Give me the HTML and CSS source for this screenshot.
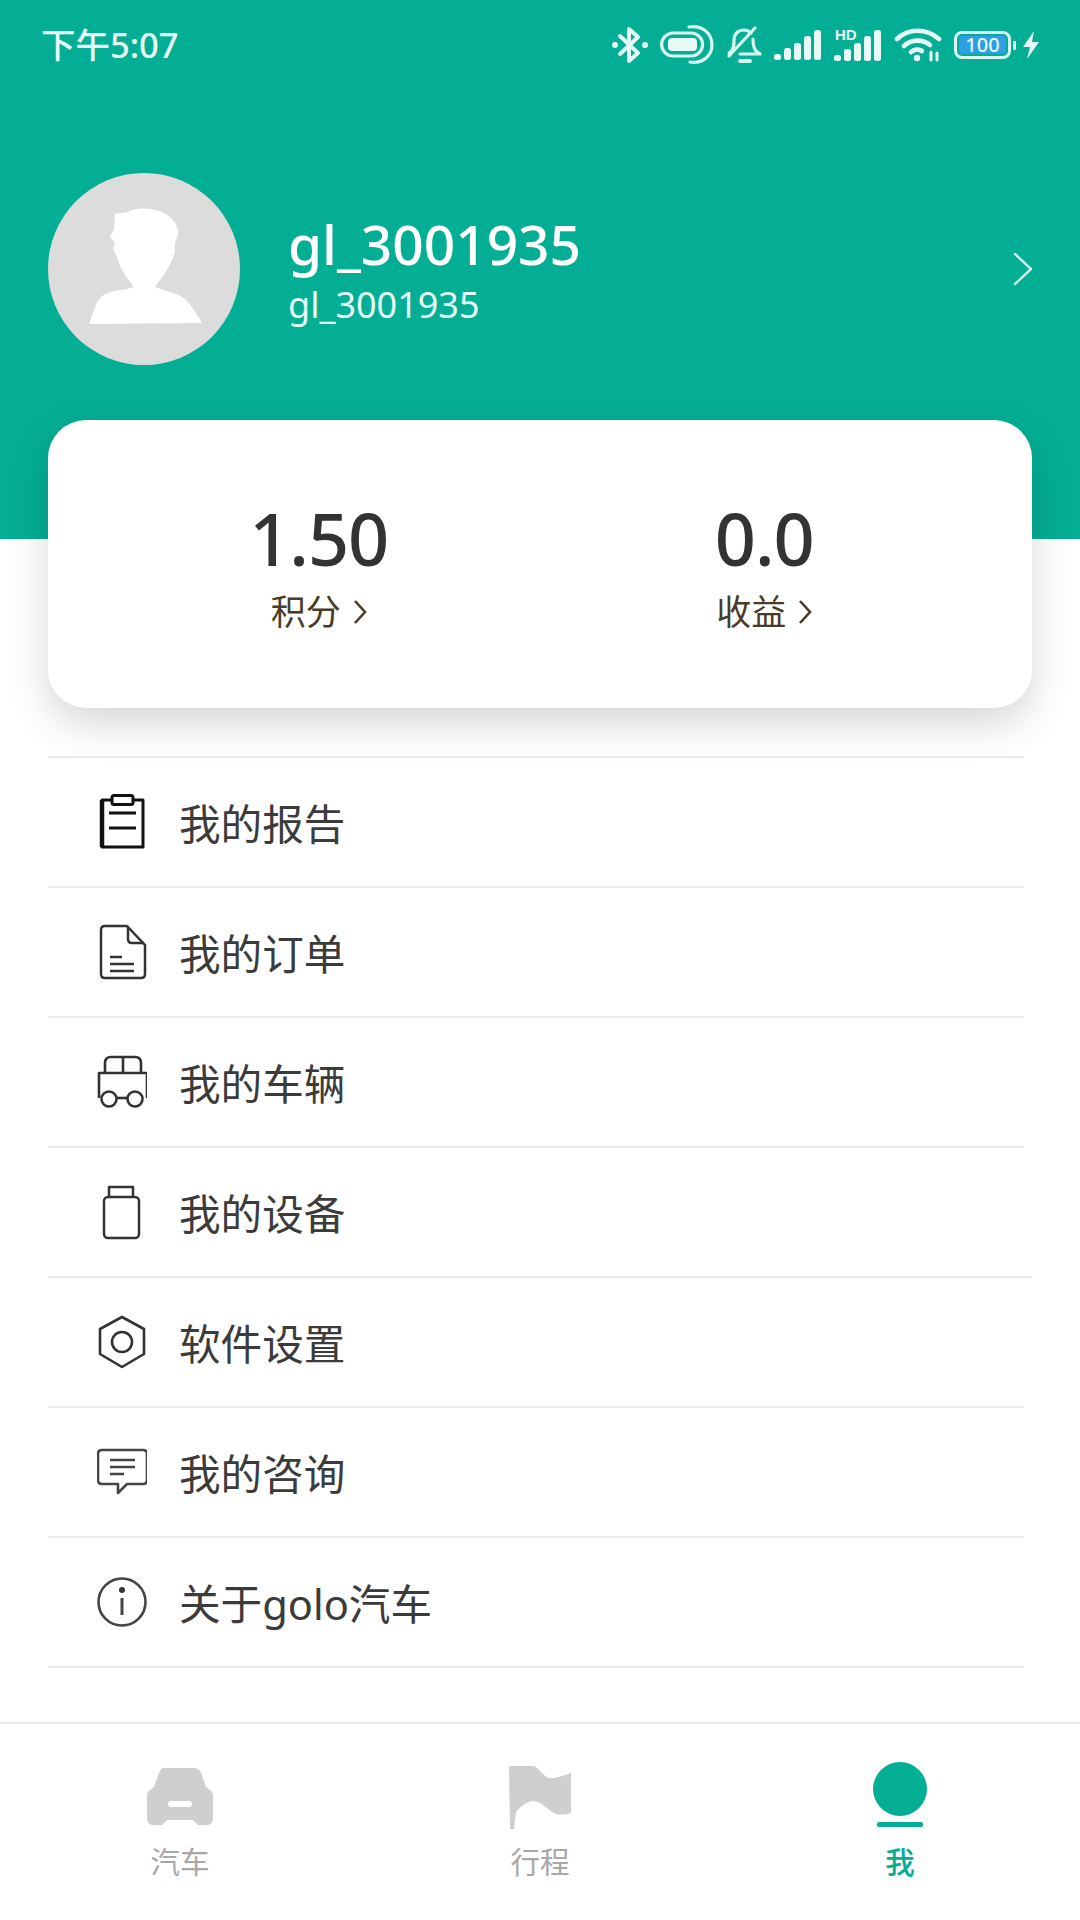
FILE: index.html
```html
<!DOCTYPE html>
<html lang="zh-CN">
<head>
<meta charset="utf-8">
<title>我</title>
<link rel="stylesheet" href="styles.css">
</head>
<body>
<div class="app">
  <header class="hero">
    <div class="statusbar">
      <span class="clock">下午5:07</span>
      <div class="status-icons">
        <svg class="si" width="36" height="38" viewBox="0 0 36 38" fill="none" stroke="#e6fbf6" stroke-width="4" stroke-linecap="round" stroke-linejoin="round"><path d="M8 10 L26 27 L17 35 V3 L26 11 L8 28"/><circle cx="3" cy="19" r="3" fill="#e6fbf6" stroke="none"/><circle cx="33" cy="19" r="3" fill="#e6fbf6" stroke="none"/></svg>
        <svg class="si" width="54" height="40" viewBox="0 0 54 40" fill="none" stroke="#d8f7f0" stroke-width="3.200"><rect x="1.600" y="8" width="41" height="23" rx="11.500"/><rect x="8" y="13" width="29" height="13" rx="4" fill="#e6fbf6" stroke="none"/><path d="M29 2 C42 0 52 8 52 20 C52 31 42 39 30 37" stroke-linecap="round"/></svg>
        <svg class="si" width="36" height="38" viewBox="0 0 36 38" fill="none" stroke="#d8f7f0" stroke-width="3.200" stroke-linecap="round" stroke-linejoin="round"><path d="M3 27 C8 24 8 19 8 14 C8 8 12 4 18 4 C21 4 23 5 25 7"/><path d="M27 13 C27 20 28 25 34 28 H14"/><path d="M3 30 L29 2"/><path d="M14 35 H24" stroke-width="3.800"/></svg>
        <svg class="si" width="48" height="32" viewBox="0 0 48 32" fill="#e6fbf6"><rect x="0" y="25" width="7" height="6" rx="2.500"/><rect x="10" y="19" width="7" height="12" rx="2.500"/><rect x="20" y="14" width="7" height="17" rx="2.500"/><rect x="30" y="7" width="7" height="24" rx="2.500"/><rect x="40" y="1" width="7" height="30" rx="2.500"/></svg>
        <svg class="si" width="48" height="40" viewBox="0 0 48 40" fill="#e6fbf6"><text class="hd" x="1" y="15">HD</text><rect x="0" y="30" width="7" height="6" rx="2.500"/><rect x="10" y="24" width="7" height="12" rx="2.500"/><rect x="20" y="18" width="7" height="18" rx="2.500"/><rect x="30" y="11" width="7" height="25" rx="2.500"/><rect x="40" y="5" width="7" height="31" rx="2.500"/></svg>
        <svg class="si" width="48" height="34" viewBox="0 0 48 34" fill="none" stroke="#e6fbf6" stroke-width="4.600" stroke-linecap="round"><path d="M3 11 C14 0 33 0 45 11"/><path d="M10 18 C17 11 29 11 36 17"/><path d="M17 24 C20 21 25 21 28 23"/><circle cx="23" cy="30" r="3.200" fill="#e6fbf6" stroke="none"/><path d="M37 24 V32 M43 25 V32" stroke-width="3"/></svg>
        <div class="battery"><div class="battery-body"><span class="battery-level">100</span></div><i class="battery-tip"></i></div>
        <svg class="si si-bolt" width="18" height="28" viewBox="0 0 18 28" fill="#e6fbf6"><path d="M12 0 L1 16 H8 L5 28 L17 11 H10 Z"/></svg>
      </div>
    </div>
    <div class="profile">
      <div class="avatar">
        <svg width="192" height="192" viewBox="0 0 192 192" fill="#fff"><path d="M67 41 L80 39 C88 34 104 34 118 41 C126 46 131 54 130 62 L127 70 L127 78 C125 88 118 100 107 114 L131 122 C139 126 145 134 154 150 L41 151 L47 134 C49 128 52 123 60 120 C68 117 78 117 86 114 C78 104 71 94 69 84 L65 76 L67 70 L62 64 L66 56 Z"/></svg>
      </div>
      <div class="who">
        <div class="who-name">gl_3001935</div>
        <div class="who-id">gl_3001935</div>
      </div>
      <svg class="who-more" width="22" height="36" viewBox="0 0 22 36" fill="none" stroke="#cdf3ea" stroke-width="2.400" stroke-linecap="round" stroke-linejoin="round"><path d="M3 3 L19 18 L3 33"/></svg>
    </div>
  </header>

  <section class="stats">
    <div class="stat">
      <div class="stat-value">1.50</div>
      <div class="stat-label">积分<svg width="14" height="26" viewBox="0 0 14 26" fill="none" stroke="#4a3a28" stroke-width="2.600"><path d="M2 2 L12 13 L2 24"/></svg></div>
    </div>
    <div class="stat">
      <div class="stat-value">0.0</div>
      <div class="stat-label">收益<svg width="14" height="26" viewBox="0 0 14 26" fill="none" stroke="#4a3a28" stroke-width="2.600"><path d="M2 2 L12 13 L2 24"/></svg></div>
    </div>
  </section>

  <ul class="menu">
    <li class="menu-row">
      <svg class="menu-icon" width="50" height="56" viewBox="0 0 50 56" fill="none" stroke="#111" stroke-width="3"><path d="M14 6 H5 V53 H46 V6 H37" stroke-linejoin="round"/><path d="M5 6 V53" stroke-width="4.500"/><rect x="15" y="1.500" width="21" height="9" rx="2"/><path d="M12 19 H39 M12 34 H39"/></svg>
      <span>我的报告</span>
    </li>
    <li class="menu-row">
      <svg class="menu-icon" width="50" height="56" viewBox="0 0 50 56" fill="none" stroke="#333" stroke-width="2.500" stroke-linejoin="round"><path d="M8 2 H30 L48 21 V50 Q48 54 44 54 H8 Q4 54 4 50 V6 Q4 2 8 2 Z"/><path d="M31 3 V15 Q31 19 35 19 H47"/><path d="M13 33 H25 M13 40 H37 M13 47 H37"/></svg>
      <span>我的订单</span>
    </li>
    <li class="menu-row">
      <svg class="menu-icon" width="50" height="56" viewBox="0 0 50 56" fill="none" stroke="#333" stroke-width="2.600" stroke-linejoin="round"><path d="M8 19 V9 Q8 3 14 3 H38 Q44 3 44 9 V19"/><path d="M26 3 V19"/><path d="M2 44 V19 H50 V44"/><path d="M12 44 H38"/><circle cx="12" cy="45" r="7.500" fill="#fff"/><circle cx="38" cy="45" r="7.500" fill="#fff"/></svg>
      <span>我的车辆</span>
    </li>
    <li class="menu-row menu-row-wide">
      <svg class="menu-icon" width="50" height="56" viewBox="0 0 50 56" fill="none" stroke="#333" stroke-width="2.500" stroke-linejoin="round"><path d="M12 13 V3 H36 V13"/><rect x="7" y="13" width="35" height="41" rx="4"/></svg>
      <span>我的设备</span>
    </li>
    <li class="menu-row">
      <svg class="menu-icon" width="50" height="56" viewBox="0 0 50 56" fill="none" stroke="#333" stroke-width="2.600" stroke-linejoin="round"><path d="M25 3 L47 15 V40 L25 53 L3 40 V15 Z"/><circle cx="25" cy="28" r="10"/></svg>
      <span>软件设置</span>
    </li>
    <li class="menu-row">
      <svg class="menu-icon" width="50" height="56" viewBox="0 0 50 56" fill="none" stroke="#444" stroke-width="2.600" stroke-linejoin="round"><path d="M5 6 H46 Q50 6 50 10 V36 Q50 40 46 40 H30 L21 49 V40 H5 Q1 40 1 36 V10 Q1 6 5 6 Z"/><path d="M13 16 H38 M13 23 H38 M13 30 H27"/></svg>
      <span>我的咨询</span>
    </li>
    <li class="menu-row">
      <svg class="menu-icon" width="50" height="56" viewBox="0 0 50 56" fill="none" stroke="#444" stroke-width="2.600"><circle cx="25" cy="28" r="23.500"/><path d="M25 24 V41" stroke-width="3"/><circle cx="25" cy="16" r="3" fill="#333" stroke="none"/></svg>
      <span>关于golo汽车</span>
    </li>
  </ul>

  <nav class="tabbar">
    <div class="tab">
      <svg class="tab-icon tab-icon-soft" width="66" height="68" viewBox="0 0 66 68" fill="#cfcfcf"><path d="M17 6 H47 Q52 6 54 11 L59 25 L64 29 Q66 31 66 35 V55 Q66 63 60 63 H51 L46 58 H20 L15 63 H6 Q0 63 0 55 V35 Q0 31 2 29 L7 25 L12 11 Q14 6 17 6 Z"/><rect x="21" y="39" width="24" height="6" rx="3" fill="#fff"/></svg>
      <span>汽车</span>
    </div>
    <div class="tab">
      <svg class="tab-icon tab-icon-soft" width="66" height="68" viewBox="0 0 66 68" fill="#cfcfcf"><path d="M2 4 H27 C32 6 36 14 42 16 C48 17 55 14 64 11 V51 C58 53 52 53 47 51 C40 47 35 40 27 39 C20 39 14 44 9 50 L7 67 H3 Z"/></svg>
      <span>行程</span>
    </div>
    <div class="tab tab-on">
      <svg class="tab-icon" width="66" height="68" viewBox="0 0 66 68" fill="#04ae94"><circle cx="33" cy="27" r="27"/><rect x="10" y="60" width="46" height="5" rx="2"/></svg>
      <span>我</span>
    </div>
  </nav>
</div>
</body>
</html>
```
FILE: styles.css
```css
* { box-sizing: border-box; }

html, body { margin: 0; padding: 0; }

body {
  width: 1080px;
  height: 1920px;
  background: #fff;
  font-family: "Noto Sans", "Noto Sans CJK SC", sans-serif;
  overflow: hidden;
}

.app { display: flex; flex-direction: column; height: 1920px; }

/* Teal header: status bar plus the account summary */
.hero {
  height: 539px;
  background: #04ae94;
  color: #fff;
  display: flex;
  flex-direction: column;
}

.statusbar {
  height: 90px;
  padding: 0 40px 0 41px;
  display: flex;
  align-items: center;
  justify-content: space-between;
}

.clock { margin-bottom: 4px; font-size: 34.500px; font-weight: 500; color: #e6fbf6; }

.status-icons { display: flex; align-items: center; gap: 12px; }
.si { display: block; flex: none; }
.si-bolt { margin-left: -6px; }
.hd { font: 700 15px "Liberation Sans", sans-serif; fill: #e6fbf6; }

.battery { display: flex; align-items: center; gap: 2px; }
.battery-body {
  width: 57px;
  height: 28px;
  border: 3px solid #d8f7f0;
  border-radius: 8px;
  padding: 2px;
  display: flex;
}
.battery-level {
  flex: 1;
  background: #2c9fe6;
  border-radius: 3px;
  color: #eaf8ff;
  font-size: 20px;
  font-weight: 500;
  line-height: 18px;
  text-align: center;
}
.battery-tip { width: 3px; height: 9px; background: #d8f7f0; border-radius: 1px; }

.profile {
  margin-top: 83px;
  padding: 0 46px 0 48px;
  display: flex;
  align-items: center;
}

.avatar {
  width: 192px;
  height: 192px;
  border-radius: 50%;
  background: #dcdcdc;
  flex: none;
}
.avatar svg { display: block; }

.who { margin-left: 48px; flex: 1; }
.who-name { font-size: 55px; font-weight: 500; line-height: 64px; }
.who-id { margin-top: 8px; font-size: 36px; line-height: 42px; color: #e6fbf6; }

/* Points and earnings card, pulled up over the header */
.stats {
  margin: -119px 48px 0 48px;
  height: 288px;
  background: #fff;
  border-radius: 38px;
  box-shadow: 0 16px 40px rgba(0, 0, 0, 0.16);
  display: flex;
  padding: 70px 45px 0 48px;
  position: relative;
}

.stat { flex: 1; display: flex; flex-direction: column; align-items: center; }

.stat-value { font-size: 72px; font-weight: 500; letter-spacing: -1px; line-height: 96px; color: #333; }

.stat-label {
  margin-top: 2px;
  font-size: 35px;
  line-height: 48px;
  color: #4a3a28;
  display: flex;
  align-items: center;
  gap: 12px;
}

.menu {
  list-style: none;
  margin: 48px 0 0 48px;
  padding: 0;
  border-top: 2px solid #ececec;
  width: 976px;
}

.menu-row {
  height: 130px;
  display: flex;
  align-items: center;
  gap: 32px;
  padding-left: 49px;
  border-bottom: 2px solid #ececec;
  font-size: 41.600px;
  color: #3b3b3b;
}
.menu-row-wide { margin-right: -8px; }
.menu-icon { display: block; flex: none; }

.tabbar {
  margin-top: 54px;
  border-top: 2px solid #ececec;
  display: grid;
  grid-template-columns: 360px 360px 360px;
  padding-top: 38px;
}

.tab {
  display: flex;
  flex-direction: column;
  align-items: center;
  color: #a8a8a8;
  font-size: 29.500px;
  line-height: 40px;
}
.tab-icon { display: block; }
.tab-icon-soft { filter: blur(0.6px); }
.tab span { margin-top: 12px; }
.tab-on { color: #04ae94; font-weight: 500; }
```
